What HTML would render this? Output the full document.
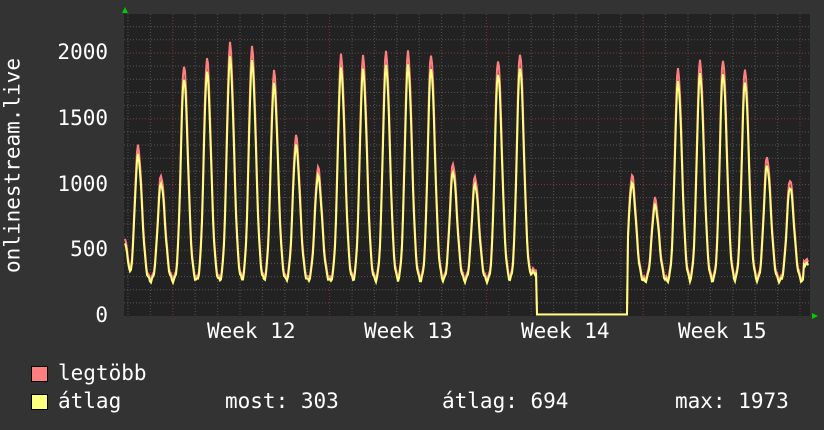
<!DOCTYPE html>
<html><head><meta charset="utf-8"><style>
html,body{margin:0;padding:0;background:#333;}
#c{position:relative;width:824px;height:430px;background:#333;overflow:hidden;font-family:"DejaVu Sans Mono","Liberation Mono",monospace;color:#fff;}
.t{position:absolute;font-size:21px;white-space:pre;line-height:21px;}
.sq{position:absolute;width:15px;height:14px;border:1px solid #000;}
</style></head><body><div id="c">
<svg id="g" width="824" height="430" style="position:absolute;left:0;top:0"></svg>
<div class="t" style="left:-97px;top:155px;transform:rotate(-90deg);width:220px;text-align:center">onlinestream.live</div>
<div class="t" style="right:716px;top:42px">2000</div>
<div class="t" style="right:716px;top:108px">1500</div>
<div class="t" style="right:716px;top:174px">1000</div>
<div class="t" style="right:716px;top:239px">500</div>
<div class="t" style="right:716px;top:305px">0</div>
<div class="t" style="left:207px;top:321px">Week 12</div>
<div class="t" style="left:364px;top:321px">Week 13</div>
<div class="t" style="left:521px;top:321px">Week 14</div>
<div class="t" style="left:678px;top:321px">Week 15</div>
<div class="sq" style="left:31px;top:366px;background:#ff7f7f"></div>
<div class="sq" style="left:31px;top:394px;background:#ffff7f"></div>
<div class="t" style="left:58px;top:363px">legtöbb</div>
<div class="t" style="left:58px;top:391px">átlag</div>
<div class="t" style="left:225px;top:391px">most: 303</div>
<div class="t" style="left:442px;top:391px">átlag: 694</div>
<div class="t" style="left:675px;top:391px">max: 1973</div>
</div>
<script>
var s='';
var X0=124,X1=810,Y0=14,Y1=316;
s+='<rect x="'+X0+'" y="'+Y0+'" width="'+(X1-X0)+'" height="'+(Y1-Y0)+'" fill="#222"/>';
function Y(v){return 316-v*0.1315;}
for(var v=100;v<=2200;v+=100){var y=Y(v).toFixed(1);var maj=v%500==0;
s+='<line x1="'+X0+'" x2="'+X1+'" y1="'+y+'" y2="'+y+'" stroke="'+(maj?'#7a3a3a':'#555')+'" stroke-dasharray="1,2"/>';}
for(var x=128;x<X1;x+=22.4){var d=Math.abs(((x-173)/157)-Math.round((x-173)/157))<0.02;
s+='<line x1="'+x.toFixed(1)+'" x2="'+x.toFixed(1)+'" y1="'+Y0+'" y2="'+Y1+'" stroke="'+(d?'#7a3a3a':'#555')+'" stroke-dasharray="1,2"/>';}
var P=[[138,1290],[161,1070],[184,1910],[207,1960],[230,2070],[252,2040],[274,1860],[296,1370],[318,1130],[341,1980],[363,1970],[386,2010],[408,2010],[431,1990],[453,1160],[475,1060],[498,1950],[520,2000],[632,1070],[655,890],[678,1880],[700,1940],[723,1950],[745,1880],[767,1210],[790,1040]];
function val(x){
 if(x>=537&&x<=627)return 12;
 var v=280;
 for(var i=0;i<P.length;i++){var dx=x-P[i][0];var w=dx<0?4.5:5.5;var f=Math.exp(-Math.pow(dx/w,2));v=Math.max(v,280+(P[i][1]-280)*f);}
 if(x<131)v=Math.max(v,650-(x-124)*50);
 if(x>=528&&x<537)v=Math.max(v,350);
 if(x>=804)v=Math.max(v,420);
 v+=15*Math.sin(x*1.7);
 return v;}
var a='',b='';
for(var x=125;x<=808;x+=1){var v=val(x);a+=(x==125?'M':'L')+x+','+Y(v).toFixed(1);b+=(x==125?'M':'L')+x+','+Y(v*0.95-(x>=537&&x<=627?0:5)).toFixed(1);}
s+='<path d="'+a+'" fill="none" stroke="#ff7f7f" stroke-width="2"/>';
s+='<path d="'+b+'" fill="none" stroke="#ffff7f" stroke-width="2"/>';
s+='<polygon points="122,13 128,13 125,7" fill="#0c0"/>';
s+='<polygon points="812,313 812,319 818,316" fill="#0c0"/>';
document.getElementById('g').innerHTML=s;
</script></body></html>
